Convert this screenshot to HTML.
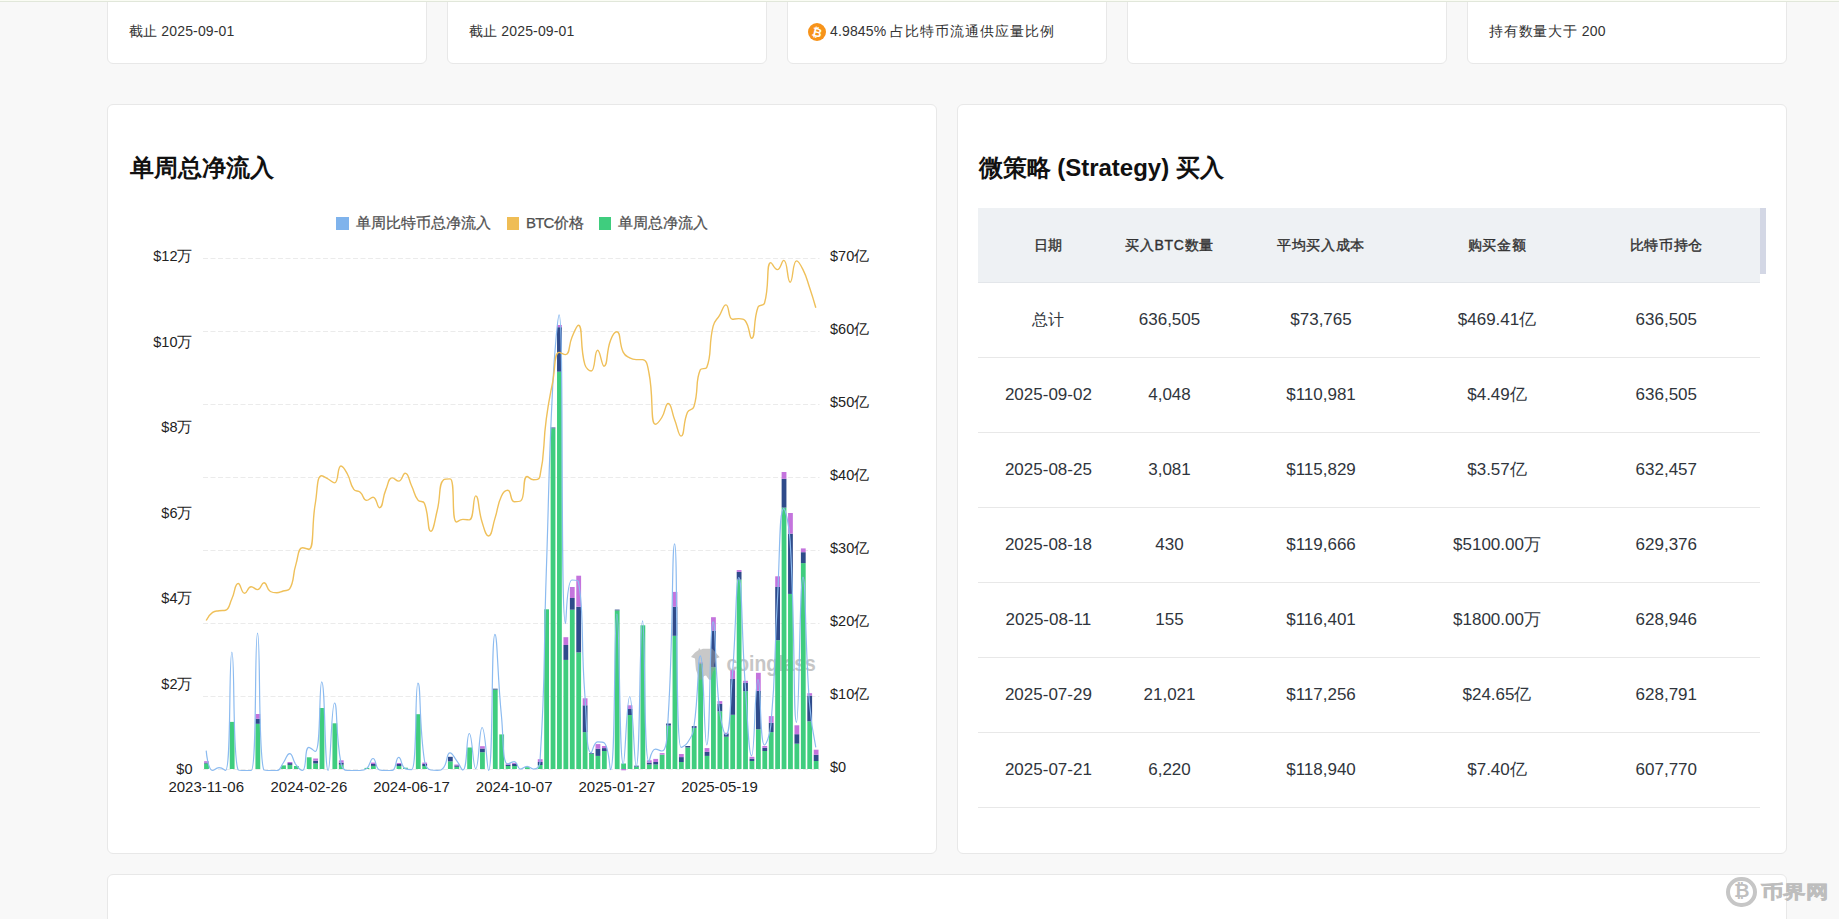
<!DOCTYPE html>
<html><head><meta charset="utf-8">
<style>
*{margin:0;padding:0;box-sizing:border-box}
html,body{width:1839px;height:919px;overflow:hidden;background:#f8f8f8;font-family:"Liberation Sans",sans-serif;color:#333}
.topline0{position:absolute;z-index:5;left:0;top:0;width:1839px;height:1px;background:#fafcf4}
.topline{position:absolute;z-index:5;left:0;top:1px;width:1839px;height:1px;background:#e1e7da}
.card{position:absolute;background:#fff;border:1px solid #e8e8e8;border-radius:6px}
.sc{top:-20px;width:320px;height:84px}
.sct{position:absolute;left:21px;top:42px;font-size:14px;letter-spacing:0.15px;line-height:16px;color:#333;white-space:nowrap}
.abs{position:absolute;white-space:nowrap}
.ttl{font-size:24px;font-weight:bold;color:#111;line-height:28px}
.th{position:absolute;top:208px;left:978px;width:782px;height:75px;background:#eef1f4;border-bottom:1px solid #e3e6ea}
.hc{position:absolute;font-size:14px;letter-spacing:0.7px;font-weight:normal;-webkit-text-stroke:0.4px #333;color:#333;text-align:center;width:200px;margin-left:-100px;line-height:16px}
.rc{position:absolute;font-size:17px;color:#30353c;text-align:center;width:240px;margin-left:-120px;line-height:18px}
.rl{position:absolute;left:978px;width:782px;height:1px;background:#e8e8e8}
.lg{font-size:15px;color:#505050;line-height:18px;-webkit-text-stroke:0.25px #505050}
.ax{font-size:14.5px;color:#222;line-height:18px;white-space:nowrap}
</style></head><body>
<div class="topline0"></div><div class="topline"></div>
<div class="card sc" style="left:107px"><div class="sct">截止 2025-09-01</div></div>
<div class="card sc" style="left:447px"><div class="sct">截止 2025-09-01</div></div>
<div class="card sc" style="left:787px"><div class="sct" style="left:42px">4.9845% <span style="letter-spacing:0.95px">占比特币流通供应量比例</span></div>
<svg class="abs" style="left:20px;top:41.5px" width="18" height="18" viewBox="0 0 18 18"><circle cx="9" cy="9" r="9" fill="#f7931a"/><text x="9" y="13.5" font-size="12" font-weight="bold" fill="#fff" text-anchor="middle" font-family="Liberation Sans" transform="rotate(14 9 9)">₿</text></svg></div>
<div class="card sc" style="left:1127px"></div>
<div class="card sc" style="left:1467px"><div class="sct"><span style="letter-spacing:0.8px">持有数量大于</span> 200</div></div>

<div class="card" style="left:107px;top:104px;width:830px;height:750px"></div>
<div class="abs ttl" style="left:128px;top:154px;left:129.5px">单周总净流入</div>


<svg class="abs" style="left:0;top:0" width="1839" height="919" viewBox="0 0 1839 919">
<line x1="203" y1="258.5" x2="819.5" y2="258.5" stroke="#ebebeb" stroke-width="1" stroke-dasharray="5 2.5"/>
<line x1="203" y1="331.5" x2="819.5" y2="331.5" stroke="#ebebeb" stroke-width="1" stroke-dasharray="5 2.5"/>
<line x1="203" y1="404.5" x2="819.5" y2="404.5" stroke="#ebebeb" stroke-width="1" stroke-dasharray="5 2.5"/>
<line x1="203" y1="477.5" x2="819.5" y2="477.5" stroke="#ebebeb" stroke-width="1" stroke-dasharray="5 2.5"/>
<line x1="203" y1="550.5" x2="819.5" y2="550.5" stroke="#ebebeb" stroke-width="1" stroke-dasharray="5 2.5"/>
<line x1="203" y1="623.5" x2="819.5" y2="623.5" stroke="#ebebeb" stroke-width="1" stroke-dasharray="5 2.5"/>
<line x1="203" y1="696.5" x2="819.5" y2="696.5" stroke="#ebebeb" stroke-width="1" stroke-dasharray="5 2.5"/>
<line x1="203" y1="769.5" x2="819.5" y2="769.5" stroke="#ebebeb" stroke-width="1" stroke-dasharray="5 2.5"/>
<rect x="621.20" y="769" width="4.8" height="1.3" fill="#c474dd"/>
<text x="726.5" y="670.8" font-family="Liberation Sans" font-weight="bold" font-size="22" fill="#c6c6c6" textLength="89.2" lengthAdjust="spacingAndGlyphs">coinglass</text>
<rect x="204.10" y="763.50" width="4.8" height="5.50" fill="#3fcd7e"/>
<rect x="204.10" y="762.60" width="4.8" height="0.90" fill="#2f4b8b"/>
<rect x="204.10" y="761.20" width="4.8" height="1.40" fill="#c474dd"/>
<rect x="229.77" y="721.90" width="4.8" height="47.10" fill="#3fcd7e"/>
<rect x="255.44" y="723.80" width="4.8" height="45.20" fill="#3fcd7e"/>
<rect x="255.44" y="718.70" width="4.8" height="5.10" fill="#2f4b8b"/>
<rect x="255.44" y="714.00" width="4.8" height="4.70" fill="#c474dd"/>
<rect x="281.10" y="765.40" width="4.8" height="3.60" fill="#3fcd7e"/>
<rect x="287.52" y="764.90" width="4.8" height="4.10" fill="#3fcd7e"/>
<rect x="287.52" y="763.10" width="4.8" height="1.80" fill="#2f4b8b"/>
<rect x="287.52" y="762.00" width="4.8" height="1.10" fill="#c474dd"/>
<rect x="293.94" y="766.00" width="4.8" height="3.00" fill="#3fcd7e"/>
<rect x="306.77" y="757.30" width="4.8" height="11.70" fill="#3fcd7e"/>
<rect x="313.19" y="763.50" width="4.8" height="5.50" fill="#3fcd7e"/>
<rect x="313.19" y="760.80" width="4.8" height="2.70" fill="#2f4b8b"/>
<rect x="313.19" y="758.50" width="4.8" height="2.30" fill="#c474dd"/>
<rect x="319.61" y="708.00" width="4.8" height="61.00" fill="#3fcd7e"/>
<rect x="332.44" y="723.30" width="4.8" height="45.70" fill="#3fcd7e"/>
<rect x="338.86" y="764.70" width="4.8" height="4.30" fill="#3fcd7e"/>
<rect x="338.86" y="762.60" width="4.8" height="2.10" fill="#2f4b8b"/>
<rect x="338.86" y="760.30" width="4.8" height="2.30" fill="#c474dd"/>
<rect x="364.53" y="767.90" width="4.8" height="1.10" fill="#3fcd7e"/>
<rect x="370.94" y="765.90" width="4.8" height="3.10" fill="#3fcd7e"/>
<rect x="370.94" y="764.00" width="4.8" height="1.90" fill="#2f4b8b"/>
<rect x="370.94" y="762.60" width="4.8" height="1.40" fill="#c474dd"/>
<rect x="396.61" y="766.00" width="4.8" height="3.00" fill="#3fcd7e"/>
<rect x="396.61" y="764.00" width="4.8" height="2.00" fill="#2f4b8b"/>
<rect x="396.61" y="763.00" width="4.8" height="1.00" fill="#c474dd"/>
<rect x="403.03" y="767.70" width="4.8" height="1.30" fill="#3fcd7e"/>
<rect x="415.86" y="714.20" width="4.8" height="54.80" fill="#3fcd7e"/>
<rect x="422.28" y="766.00" width="4.8" height="3.00" fill="#3fcd7e"/>
<rect x="422.28" y="764.00" width="4.8" height="2.00" fill="#2f4b8b"/>
<rect x="422.28" y="762.60" width="4.8" height="1.40" fill="#c474dd"/>
<rect x="447.95" y="761.40" width="4.8" height="7.60" fill="#3fcd7e"/>
<rect x="447.95" y="756.80" width="4.8" height="4.60" fill="#2f4b8b"/>
<rect x="454.36" y="766.80" width="4.8" height="2.20" fill="#3fcd7e"/>
<rect x="454.36" y="765.40" width="4.8" height="1.40" fill="#2f4b8b"/>
<rect x="454.36" y="764.50" width="4.8" height="0.90" fill="#c474dd"/>
<rect x="467.20" y="747.50" width="4.8" height="21.50" fill="#3fcd7e"/>
<rect x="480.03" y="752.20" width="4.8" height="16.80" fill="#3fcd7e"/>
<rect x="480.03" y="748.50" width="4.8" height="3.70" fill="#2f4b8b"/>
<rect x="480.03" y="746.20" width="4.8" height="2.30" fill="#c474dd"/>
<rect x="492.87" y="689.60" width="4.8" height="79.40" fill="#3fcd7e"/>
<rect x="492.87" y="688.70" width="4.8" height="0.90" fill="#2f4b8b"/>
<rect x="499.28" y="734.40" width="4.8" height="34.60" fill="#3fcd7e"/>
<rect x="505.70" y="766.00" width="4.8" height="3.00" fill="#3fcd7e"/>
<rect x="505.70" y="764.70" width="4.8" height="1.30" fill="#2f4b8b"/>
<rect x="505.70" y="763.30" width="4.8" height="1.40" fill="#c474dd"/>
<rect x="512.12" y="766.00" width="4.8" height="3.00" fill="#3fcd7e"/>
<rect x="512.12" y="764.00" width="4.8" height="2.00" fill="#2f4b8b"/>
<rect x="512.12" y="763.00" width="4.8" height="1.00" fill="#c474dd"/>
<rect x="524.95" y="767.20" width="4.8" height="1.80" fill="#3fcd7e"/>
<rect x="537.78" y="765.00" width="4.8" height="4.00" fill="#3fcd7e"/>
<rect x="537.78" y="762.00" width="4.8" height="3.00" fill="#2f4b8b"/>
<rect x="537.78" y="759.20" width="4.8" height="2.80" fill="#c474dd"/>
<rect x="544.20" y="609.30" width="4.8" height="159.70" fill="#3fcd7e"/>
<rect x="550.62" y="428.30" width="4.8" height="340.70" fill="#3fcd7e"/>
<rect x="550.62" y="427.50" width="4.8" height="0.80" fill="#2f4b8b"/>
<rect x="557.03" y="371.70" width="4.8" height="397.30" fill="#3fcd7e"/>
<rect x="557.03" y="327.20" width="4.8" height="44.50" fill="#2f4b8b"/>
<rect x="557.03" y="325.00" width="4.8" height="2.20" fill="#c474dd"/>
<rect x="563.45" y="659.90" width="4.8" height="109.10" fill="#3fcd7e"/>
<rect x="563.45" y="645.00" width="4.8" height="14.90" fill="#2f4b8b"/>
<rect x="563.45" y="637.20" width="4.8" height="7.80" fill="#c474dd"/>
<rect x="569.87" y="609.70" width="4.8" height="159.30" fill="#3fcd7e"/>
<rect x="569.87" y="598.00" width="4.8" height="11.70" fill="#2f4b8b"/>
<rect x="569.87" y="587.00" width="4.8" height="11.00" fill="#c474dd"/>
<rect x="576.29" y="652.40" width="4.8" height="116.60" fill="#3fcd7e"/>
<rect x="576.29" y="606.70" width="4.8" height="45.70" fill="#2f4b8b"/>
<rect x="576.29" y="575.70" width="4.8" height="31.00" fill="#c474dd"/>
<rect x="582.70" y="732.10" width="4.8" height="36.90" fill="#3fcd7e"/>
<rect x="582.70" y="705.30" width="4.8" height="26.80" fill="#2f4b8b"/>
<rect x="582.70" y="698.30" width="4.8" height="7.00" fill="#c474dd"/>
<rect x="589.12" y="753.80" width="4.8" height="15.20" fill="#3fcd7e"/>
<rect x="589.12" y="753.10" width="4.8" height="0.70" fill="#2f4b8b"/>
<rect x="595.54" y="755.90" width="4.8" height="13.10" fill="#3fcd7e"/>
<rect x="595.54" y="748.70" width="4.8" height="7.20" fill="#2f4b8b"/>
<rect x="595.54" y="744.10" width="4.8" height="4.60" fill="#c474dd"/>
<rect x="601.95" y="751.00" width="4.8" height="18.00" fill="#3fcd7e"/>
<rect x="601.95" y="748.10" width="4.8" height="2.90" fill="#2f4b8b"/>
<rect x="601.95" y="746.00" width="4.8" height="2.10" fill="#c474dd"/>
<rect x="614.79" y="610.40" width="4.8" height="158.60" fill="#3fcd7e"/>
<rect x="614.79" y="609.60" width="4.8" height="0.80" fill="#2f4b8b"/>
<rect x="621.20" y="763.50" width="4.8" height="5.50" fill="#3fcd7e"/>
<rect x="627.62" y="715.00" width="4.8" height="54.00" fill="#3fcd7e"/>
<rect x="627.62" y="709.00" width="4.8" height="6.00" fill="#2f4b8b"/>
<rect x="627.62" y="705.30" width="4.8" height="3.70" fill="#c474dd"/>
<rect x="634.04" y="766.60" width="4.8" height="2.40" fill="#3fcd7e"/>
<rect x="634.04" y="765.70" width="4.8" height="0.90" fill="#2f4b8b"/>
<rect x="640.46" y="625.30" width="4.8" height="143.70" fill="#3fcd7e"/>
<rect x="646.87" y="764.50" width="4.8" height="4.50" fill="#3fcd7e"/>
<rect x="646.87" y="762.60" width="4.8" height="1.90" fill="#2f4b8b"/>
<rect x="646.87" y="760.30" width="4.8" height="2.30" fill="#c474dd"/>
<rect x="653.29" y="764.50" width="4.8" height="4.50" fill="#3fcd7e"/>
<rect x="653.29" y="762.00" width="4.8" height="2.50" fill="#2f4b8b"/>
<rect x="653.29" y="758.90" width="4.8" height="3.10" fill="#c474dd"/>
<rect x="659.71" y="754.60" width="4.8" height="14.40" fill="#3fcd7e"/>
<rect x="659.71" y="753.10" width="4.8" height="1.50" fill="#c474dd"/>
<rect x="666.12" y="725.60" width="4.8" height="43.40" fill="#3fcd7e"/>
<rect x="666.12" y="723.50" width="4.8" height="2.10" fill="#2f4b8b"/>
<rect x="672.54" y="635.80" width="4.8" height="133.20" fill="#3fcd7e"/>
<rect x="672.54" y="606.70" width="4.8" height="29.10" fill="#2f4b8b"/>
<rect x="672.54" y="591.90" width="4.8" height="14.80" fill="#c474dd"/>
<rect x="678.96" y="762.00" width="4.8" height="7.00" fill="#3fcd7e"/>
<rect x="678.96" y="757.10" width="4.8" height="4.90" fill="#2f4b8b"/>
<rect x="678.96" y="754.00" width="4.8" height="3.10" fill="#c474dd"/>
<rect x="685.37" y="747.50" width="4.8" height="21.50" fill="#3fcd7e"/>
<rect x="685.37" y="746.00" width="4.8" height="1.50" fill="#2f4b8b"/>
<rect x="691.79" y="727.90" width="4.8" height="41.10" fill="#3fcd7e"/>
<rect x="691.79" y="726.10" width="4.8" height="1.80" fill="#2f4b8b"/>
<rect x="698.21" y="663.40" width="4.8" height="105.60" fill="#3fcd7e"/>
<rect x="698.21" y="662.60" width="4.8" height="0.80" fill="#c474dd"/>
<rect x="704.63" y="755.90" width="4.8" height="13.10" fill="#3fcd7e"/>
<rect x="704.63" y="751.80" width="4.8" height="4.10" fill="#2f4b8b"/>
<rect x="704.63" y="748.10" width="4.8" height="3.70" fill="#c474dd"/>
<rect x="711.04" y="667.20" width="4.8" height="101.80" fill="#3fcd7e"/>
<rect x="711.04" y="630.60" width="4.8" height="36.60" fill="#2f4b8b"/>
<rect x="711.04" y="617.20" width="4.8" height="13.40" fill="#c474dd"/>
<rect x="717.46" y="711.30" width="4.8" height="57.70" fill="#3fcd7e"/>
<rect x="717.46" y="703.90" width="4.8" height="7.40" fill="#2f4b8b"/>
<rect x="717.46" y="701.10" width="4.8" height="2.80" fill="#c474dd"/>
<rect x="723.88" y="736.70" width="4.8" height="32.30" fill="#3fcd7e"/>
<rect x="723.88" y="733.50" width="4.8" height="3.20" fill="#2f4b8b"/>
<rect x="723.88" y="732.70" width="4.8" height="0.80" fill="#c474dd"/>
<rect x="730.29" y="714.80" width="4.8" height="54.20" fill="#3fcd7e"/>
<rect x="730.29" y="679.00" width="4.8" height="35.80" fill="#2f4b8b"/>
<rect x="730.29" y="670.30" width="4.8" height="8.70" fill="#c474dd"/>
<rect x="736.71" y="579.70" width="4.8" height="189.30" fill="#3fcd7e"/>
<rect x="736.71" y="571.90" width="4.8" height="7.80" fill="#2f4b8b"/>
<rect x="736.71" y="570.10" width="4.8" height="1.80" fill="#c474dd"/>
<rect x="743.13" y="691.20" width="4.8" height="77.80" fill="#3fcd7e"/>
<rect x="743.13" y="682.90" width="4.8" height="8.30" fill="#2f4b8b"/>
<rect x="743.13" y="680.80" width="4.8" height="2.10" fill="#c474dd"/>
<rect x="749.54" y="761.00" width="4.8" height="8.00" fill="#3fcd7e"/>
<rect x="749.54" y="758.60" width="4.8" height="2.40" fill="#2f4b8b"/>
<rect x="749.54" y="756.80" width="4.8" height="1.80" fill="#c474dd"/>
<rect x="755.96" y="729.30" width="4.8" height="39.70" fill="#3fcd7e"/>
<rect x="755.96" y="690.90" width="4.8" height="38.40" fill="#2f4b8b"/>
<rect x="755.96" y="672.80" width="4.8" height="18.10" fill="#c474dd"/>
<rect x="762.38" y="751.00" width="4.8" height="18.00" fill="#3fcd7e"/>
<rect x="762.38" y="747.80" width="4.8" height="3.20" fill="#2f4b8b"/>
<rect x="762.38" y="746.00" width="4.8" height="1.80" fill="#c474dd"/>
<rect x="768.80" y="732.10" width="4.8" height="36.90" fill="#3fcd7e"/>
<rect x="768.80" y="722.80" width="4.8" height="9.30" fill="#2f4b8b"/>
<rect x="768.80" y="716.10" width="4.8" height="6.70" fill="#c474dd"/>
<rect x="775.21" y="640.20" width="4.8" height="128.80" fill="#3fcd7e"/>
<rect x="775.21" y="587.00" width="4.8" height="53.20" fill="#2f4b8b"/>
<rect x="775.21" y="576.30" width="4.8" height="10.70" fill="#c474dd"/>
<rect x="781.63" y="507.60" width="4.8" height="261.40" fill="#3fcd7e"/>
<rect x="781.63" y="478.80" width="4.8" height="28.80" fill="#2f4b8b"/>
<rect x="781.63" y="472.00" width="4.8" height="6.80" fill="#c474dd"/>
<rect x="788.05" y="593.90" width="4.8" height="175.10" fill="#3fcd7e"/>
<rect x="788.05" y="533.70" width="4.8" height="60.20" fill="#2f4b8b"/>
<rect x="788.05" y="513.00" width="4.8" height="20.70" fill="#c474dd"/>
<rect x="794.46" y="743.70" width="4.8" height="25.30" fill="#3fcd7e"/>
<rect x="794.46" y="734.20" width="4.8" height="9.50" fill="#2f4b8b"/>
<rect x="794.46" y="725.30" width="4.8" height="8.90" fill="#c474dd"/>
<rect x="800.88" y="563.10" width="4.8" height="205.90" fill="#3fcd7e"/>
<rect x="800.88" y="552.20" width="4.8" height="10.90" fill="#2f4b8b"/>
<rect x="800.88" y="548.40" width="4.8" height="3.80" fill="#c474dd"/>
<rect x="807.30" y="721.30" width="4.8" height="47.70" fill="#3fcd7e"/>
<rect x="807.30" y="695.60" width="4.8" height="25.70" fill="#2f4b8b"/>
<rect x="807.30" y="693.20" width="4.8" height="2.40" fill="#c474dd"/>
<rect x="813.72" y="761.00" width="4.8" height="8.00" fill="#3fcd7e"/>
<rect x="813.72" y="754.80" width="4.8" height="6.20" fill="#2f4b8b"/>
<rect x="813.72" y="749.70" width="4.8" height="5.10" fill="#c474dd"/>
<path fill="#9a9a9a" fill-opacity="0.55" d="M691,657 L695,652.5 L698.5,650 L699,647.8 L700.5,649.8 L703,648.8 L710,648.8 L712,648.5 L716.5,653.5 L719.7,657.2 L716,658.5 L714,665 L715,669 L713,672 L711,679.8 L709,679.8 L706,675.5 L704,676 L702,679.8 L699,679.8 L697.5,674 L696,670 L695.5,665 L695,658.5 Z"/>
<path d="M206.20,750.60 C206.20,750.60 207.81,770.50 212.62,770.50 C214.23,770.50 215.83,767.70 219.03,767.70 C222.24,767.70 225.09,770.50 225.45,770.50 C231.51,770.50 228.65,652.20 231.87,652.20 C235.07,652.20 232.20,760.84 238.28,770.00 C238.62,770.50 241.49,770.50 244.70,770.50 C247.91,770.50 250.83,770.50 251.12,770.50 C257.25,770.50 254.32,633.10 257.54,633.10 C260.74,633.10 257.82,759.35 263.95,770.00 C264.24,770.50 267.16,770.50 270.37,770.50 C273.57,770.50 274.26,770.50 276.79,770.50 C280.68,770.50 280.22,766.92 283.20,763.00 C286.64,758.47 286.62,753.60 289.62,753.60 C293.04,753.60 292.16,759.80 296.04,764.90 C298.58,768.25 300.77,770.50 302.45,770.50 C307.19,770.50 304.00,747.40 308.87,747.40 C310.42,747.40 314.66,751.50 315.29,751.50 C321.08,751.50 318.88,681.80 321.71,681.80 C325.30,681.80 324.48,770.50 328.12,770.50 C330.90,770.50 331.15,703.00 334.54,703.00 C337.56,703.00 335.43,734.06 340.96,763.10 C341.85,767.81 343.50,770.50 347.37,770.50 C349.91,770.50 350.58,770.50 353.79,770.50 C357.00,770.50 357.07,770.50 360.21,770.50 C363.48,770.50 364.32,770.50 366.62,768.60 C370.74,765.20 369.99,758.50 373.04,758.50 C376.40,758.50 375.15,768.98 379.46,770.00 C381.57,770.50 382.66,770.50 385.88,770.50 C389.08,770.50 390.32,770.50 392.29,770.30 C396.74,769.85 395.33,757.30 398.71,757.30 C401.74,757.30 400.85,766.60 405.13,768.60 C407.27,769.60 411.10,769.60 411.54,769.60 C417.51,769.60 414.56,683.20 417.96,683.20 C420.98,683.20 418.82,722.40 424.38,760.00 C425.24,765.80 426.63,769.44 430.79,770.00 C433.05,770.30 434.12,770.30 437.21,770.30 C440.54,770.30 441.70,770.30 443.63,767.70 C448.12,761.64 446.05,752.90 450.05,752.90 C452.47,752.90 453.53,756.39 456.46,760.30 C459.95,764.94 461.35,770.00 462.88,770.00 C467.76,770.00 466.03,733.50 469.30,733.50 C472.44,733.50 472.75,768.60 475.71,768.60 C479.17,768.60 478.99,727.50 482.13,727.50 C485.41,727.50 487.00,770.50 488.55,770.50 C493.41,770.50 490.94,634.30 494.96,634.30 C497.36,634.30 497.39,674.83 501.38,715.19 C503.80,739.68 502.16,764.00 507.80,764.00 C508.58,764.00 511.57,761.70 514.22,761.70 C517.99,761.70 516.89,769.00 520.63,769.00 C523.31,769.00 523.84,766.30 527.05,766.30 C530.26,766.30 530.63,769.00 533.47,769.00 C537.05,769.00 539.60,767.33 539.88,763.00 C546.02,668.65 543.04,667.32 546.30,571.65 C549.46,478.78 548.08,478.69 552.72,385.92 C554.50,350.27 557.93,314.80 559.13,314.80 C564.35,314.80 559.94,623.60 565.55,623.60 C566.35,623.60 566.39,580.00 571.97,580.00 C572.81,580.00 578.03,580.00 578.39,581.80 C584.44,612.23 580.59,638.14 584.80,694.30 C587.01,723.69 585.95,752.90 591.22,752.90 C592.37,752.90 593.37,741.80 597.64,741.80 C599.79,741.80 602.84,741.80 604.05,742.70 C609.25,746.54 609.50,769.60 610.47,769.60 C615.92,769.60 613.62,614.00 616.89,614.00 C620.04,614.00 618.88,764.00 623.30,764.00 C625.30,764.00 626.57,696.50 629.72,696.50 C632.98,696.50 634.05,766.30 636.14,766.30 C640.47,766.30 639.30,620.80 642.56,620.80 C645.71,620.80 643.14,761.70 648.97,761.70 C649.55,761.70 651.04,749.20 655.39,749.20 C657.45,749.20 660.79,751.00 661.81,751.00 C667.21,751.00 667.13,733.84 668.22,716.22 C673.55,630.24 671.70,543.80 674.64,543.80 C678.12,543.80 674.88,747.40 681.06,747.40 C681.30,747.40 685.43,745.96 687.47,742.70 C691.84,735.76 692.66,735.33 693.89,727.00 C699.08,691.93 697.46,655.90 700.31,655.90 C703.88,655.90 704.03,745.00 706.73,745.00 C710.45,745.00 709.41,621.90 713.14,621.90 C715.83,621.90 714.57,666.39 719.56,710.30 C720.99,722.89 724.08,734.90 725.98,734.90 C730.49,734.90 729.94,704.92 732.39,674.82 C736.36,626.22 735.76,577.50 738.81,577.50 C742.17,577.50 741.37,631.15 745.23,684.71 C747.79,720.25 748.54,755.70 751.64,755.70 C754.96,755.70 754.61,679.70 758.06,679.70 C761.03,679.70 759.62,745.00 764.48,745.00 C766.04,745.00 769.96,735.39 770.90,724.95 C776.37,664.01 773.68,663.57 777.31,602.24 C780.09,555.40 778.99,508.60 783.73,508.60 C785.41,508.60 789.15,524.64 790.15,541.19 C795.57,631.54 793.00,722.40 796.56,722.40 C799.42,722.40 799.53,577.00 802.98,577.00 C805.95,577.00 804.70,639.61 809.40,701.93 C811.12,724.81 815.82,747.40 815.82,747.40" fill="none" stroke="#8cbbf0" stroke-width="1.2" stroke-linejoin="round"/>
<path d="M206.20,620.50 C206.20,620.50 208.71,615.05 212.62,612.40 C215.13,610.70 215.78,611.22 219.03,610.70 C222.19,610.20 223.34,610.70 225.45,610.20 C229.76,609.18 229.02,604.63 231.87,598.70 C235.44,591.28 234.53,583.50 238.28,583.50 C240.95,583.50 241.11,593.30 244.70,593.30 C247.53,593.30 247.48,586.70 251.12,586.70 C253.90,586.70 254.78,589.60 257.54,589.60 C261.20,589.60 260.98,582.80 263.95,582.80 C267.39,582.80 266.37,589.35 270.37,591.50 C272.79,592.80 273.61,592.80 276.79,592.80 C280.02,592.80 280.02,591.97 283.20,591.00 C286.43,590.02 288.29,591.00 289.62,588.90 C294.71,580.87 292.20,576.19 296.04,563.90 C298.62,555.64 297.80,547.80 302.45,547.80 C304.22,547.80 308.07,549.20 308.87,549.20 C314.49,549.20 311.32,526.21 315.29,503.50 C317.74,489.51 316.58,475.80 321.71,475.80 C323.00,475.80 324.99,477.27 328.12,479.00 C331.41,480.82 332.66,482.90 334.54,482.90 C339.07,482.90 336.86,466.00 340.96,466.00 C343.28,466.00 344.93,469.55 347.37,474.00 C351.35,481.25 349.28,482.97 353.79,489.40 C355.70,492.12 357.61,490.07 360.21,492.30 C364.02,495.57 362.84,500.40 366.62,500.40 C369.25,500.40 370.68,497.20 373.04,497.20 C377.10,497.20 376.95,507.70 379.46,507.70 C383.37,507.70 382.09,498.39 385.88,489.60 C388.51,483.49 388.12,477.90 392.29,477.90 C394.54,477.90 396.05,481.10 398.71,481.10 C402.46,481.10 402.43,473.30 405.13,473.30 C408.85,473.30 408.53,479.41 411.54,485.70 C414.95,492.81 413.55,494.05 417.96,500.10 C419.97,502.85 423.10,500.18 424.38,503.30 C429.52,515.83 427.15,531.40 430.79,531.40 C433.56,531.40 434.58,521.10 437.21,510.50 C440.99,495.30 438.31,484.16 443.63,479.80 C444.73,478.90 449.22,478.90 450.05,478.90 C455.63,478.90 450.93,522.00 456.46,522.00 C457.34,522.00 459.55,519.40 462.88,519.40 C465.97,519.40 467.98,519.90 469.30,519.90 C474.39,519.90 472.65,495.90 475.71,495.90 C479.07,495.90 478.01,509.42 482.13,522.30 C484.43,529.47 485.68,536.00 488.55,536.00 C492.10,536.00 492.09,527.31 494.96,518.40 C498.51,507.41 496.72,506.40 501.38,496.20 C503.14,492.35 505.23,490.30 507.80,490.30 C511.65,490.30 509.92,501.70 514.22,501.70 C516.34,501.70 519.33,501.70 520.63,501.00 C525.75,498.25 522.06,476.50 527.05,476.50 C528.47,476.50 530.26,479.80 533.47,479.80 C536.68,479.80 539.17,479.80 539.88,476.50 C545.59,449.95 542.40,447.55 546.30,418.80 C548.82,400.20 549.16,400.23 552.72,381.80 C555.57,367.03 553.90,352.40 559.13,352.40 C560.32,352.40 563.83,354.60 565.55,354.60 C570.25,354.60 568.27,345.68 571.97,337.20 C574.68,330.98 576.75,325.20 578.39,325.20 C583.17,325.20 579.59,345.81 584.80,364.40 C586.01,368.71 589.31,371.00 591.22,371.00 C595.72,371.00 594.05,350.30 597.64,350.30 C600.47,350.30 601.53,366.20 604.05,366.20 C607.95,366.20 605.91,352.71 610.47,340.50 C612.33,335.51 614.75,331.80 616.89,331.80 C621.16,331.80 618.69,343.02 623.30,352.40 C625.11,356.07 626.13,355.88 629.72,357.90 C632.54,359.48 632.88,359.60 636.14,359.60 C639.29,359.60 640.62,359.60 642.56,359.60 C647.04,359.60 647.54,365.78 648.97,373.00 C653.96,398.13 649.96,424.30 655.39,424.30 C656.37,424.30 659.38,421.43 661.81,417.50 C665.80,411.03 665.22,403.50 668.22,403.50 C671.64,403.50 671.43,411.65 674.64,419.80 C677.85,427.95 678.40,436.10 681.06,436.10 C684.82,436.10 682.69,423.16 687.47,412.20 C689.11,408.46 692.71,410.60 693.89,406.70 C699.13,389.35 694.87,381.88 700.31,369.70 C701.29,367.50 705.83,369.70 706.73,367.50 C712.25,353.95 708.22,346.24 713.14,326.20 C714.63,320.14 716.30,320.72 719.56,315.30 C722.71,310.07 723.17,304.90 725.98,304.90 C729.58,304.90 727.85,319.20 732.39,319.20 C734.26,319.20 735.68,318.60 738.81,318.60 C742.09,318.60 743.52,318.60 745.23,320.70 C749.94,326.50 749.28,338.20 751.64,338.20 C755.69,338.20 752.86,321.16 758.06,307.00 C759.27,303.71 763.50,306.68 764.48,303.30 C769.92,284.48 765.68,262.60 770.90,262.60 C772.10,262.60 774.37,269.60 777.31,269.60 C780.79,269.60 781.61,260.40 783.73,260.40 C788.03,260.40 786.90,282.20 790.15,282.20 C793.32,282.20 792.25,260.90 796.56,260.90 C798.66,260.90 800.62,264.79 802.98,269.60 C807.03,277.84 806.44,278.22 809.40,287.00 C812.86,297.27 815.82,307.70 815.82,307.70" fill="none" stroke="#efc05a" stroke-width="1.4" stroke-linejoin="round"/>
</svg>
<div class="abs" style="left:336px;top:217px;width:13px;height:12.5px;background:#7fb3ec"></div>
<div class="abs lg" style="left:355.5px;top:214px">单周比特币总净流入</div>
<div class="abs" style="left:506.5px;top:217px;width:12.5px;height:12.5px;background:#efbd55"></div>
<div class="abs lg" style="left:526px;top:214px"><span style="letter-spacing:-0.8px">BTC</span>价格</div>
<div class="abs" style="left:598.5px;top:217px;width:12.5px;height:12.5px;background:#3fcd7e"></div>
<div class="abs lg" style="left:618px;top:214px">单周总净流入</div>
<div class="abs ax" style="right:1646.5px;top:760.0px">$0</div>
<div class="abs ax" style="right:1646.5px;top:674.5px">$2万</div>
<div class="abs ax" style="right:1646.5px;top:589.0px">$4万</div>
<div class="abs ax" style="right:1646.5px;top:503.5px">$6万</div>
<div class="abs ax" style="right:1646.5px;top:418.0px">$8万</div>
<div class="abs ax" style="right:1646.5px;top:332.5px">$10万</div>
<div class="abs ax" style="right:1646.5px;top:247.0px">$12万</div>
<div class="abs ax" style="left:830px;top:758.0px">$0</div>
<div class="abs ax" style="left:830px;top:685.0px">$10亿</div>
<div class="abs ax" style="left:830px;top:612.0px">$20亿</div>
<div class="abs ax" style="left:830px;top:539.0px">$30亿</div>
<div class="abs ax" style="left:830px;top:466.0px">$40亿</div>
<div class="abs ax" style="left:830px;top:393.0px">$50亿</div>
<div class="abs ax" style="left:830px;top:320.0px">$60亿</div>
<div class="abs ax" style="left:830px;top:247.0px">$70亿</div>
<div class="abs ax" style="font-size:15px;left:146.2px;width:120px;text-align:center;top:778px">2023-11-06</div>
<div class="abs ax" style="font-size:15px;left:248.9px;width:120px;text-align:center;top:778px">2024-02-26</div>
<div class="abs ax" style="font-size:15px;left:351.5px;width:120px;text-align:center;top:778px">2024-06-17</div>
<div class="abs ax" style="font-size:15px;left:454.2px;width:120px;text-align:center;top:778px">2024-10-07</div>
<div class="abs ax" style="font-size:15px;left:556.9px;width:120px;text-align:center;top:778px">2025-01-27</div>
<div class="abs ax" style="font-size:15px;left:659.6px;width:120px;text-align:center;top:778px">2025-05-19</div>


<div class="card" style="left:957px;top:104px;width:830px;height:750px"></div>
<div class="abs ttl" style="left:978.5px;top:154px">微策略 (Strategy) 买入</div>
<div class="th"></div>
<div class="abs" style="left:1760px;top:208px;width:6px;height:66px;background:#d3d7e5"></div>
<div class="hc" style="left:1048.4px;top:237px">日期</div>
<div class="hc" style="left:1169.5px;top:237px">买入BTC数量</div>
<div class="hc" style="left:1321px;top:237px">平均买入成本</div>
<div class="hc" style="left:1497px;top:237px">购买金额</div>
<div class="hc" style="left:1666.3px;top:237px">比特币持仓</div>
<div class="rc" style="left:1048.4px;top:310.5px;font-size:16px">总计</div>
<div class="rc" style="left:1169.5px;top:310.5px">636,505</div>
<div class="rc" style="left:1321px;top:310.5px">$73,765</div>
<div class="rc" style="left:1497px;top:310.5px">$469.41亿</div>
<div class="rc" style="left:1666.3px;top:310.5px">636,505</div>
<div class="rl" style="top:357px"></div>
<div class="rc" style="left:1048.4px;top:385.5px">2025-09-02</div>
<div class="rc" style="left:1169.5px;top:385.5px">4,048</div>
<div class="rc" style="left:1321px;top:385.5px">$110,981</div>
<div class="rc" style="left:1497px;top:385.5px">$4.49亿</div>
<div class="rc" style="left:1666.3px;top:385.5px">636,505</div>
<div class="rl" style="top:432px"></div>
<div class="rc" style="left:1048.4px;top:460.5px">2025-08-25</div>
<div class="rc" style="left:1169.5px;top:460.5px">3,081</div>
<div class="rc" style="left:1321px;top:460.5px">$115,829</div>
<div class="rc" style="left:1497px;top:460.5px">$3.57亿</div>
<div class="rc" style="left:1666.3px;top:460.5px">632,457</div>
<div class="rl" style="top:507px"></div>
<div class="rc" style="left:1048.4px;top:535.5px">2025-08-18</div>
<div class="rc" style="left:1169.5px;top:535.5px">430</div>
<div class="rc" style="left:1321px;top:535.5px">$119,666</div>
<div class="rc" style="left:1497px;top:535.5px">$5100.00万</div>
<div class="rc" style="left:1666.3px;top:535.5px">629,376</div>
<div class="rl" style="top:582px"></div>
<div class="rc" style="left:1048.4px;top:610.5px">2025-08-11</div>
<div class="rc" style="left:1169.5px;top:610.5px">155</div>
<div class="rc" style="left:1321px;top:610.5px">$116,401</div>
<div class="rc" style="left:1497px;top:610.5px">$1800.00万</div>
<div class="rc" style="left:1666.3px;top:610.5px">628,946</div>
<div class="rl" style="top:657px"></div>
<div class="rc" style="left:1048.4px;top:685.5px">2025-07-29</div>
<div class="rc" style="left:1169.5px;top:685.5px">21,021</div>
<div class="rc" style="left:1321px;top:685.5px">$117,256</div>
<div class="rc" style="left:1497px;top:685.5px">$24.65亿</div>
<div class="rc" style="left:1666.3px;top:685.5px">628,791</div>
<div class="rl" style="top:732px"></div>
<div class="rc" style="left:1048.4px;top:760.5px">2025-07-21</div>
<div class="rc" style="left:1169.5px;top:760.5px">6,220</div>
<div class="rc" style="left:1321px;top:760.5px">$118,940</div>
<div class="rc" style="left:1497px;top:760.5px">$7.40亿</div>
<div class="rc" style="left:1666.3px;top:760.5px">607,770</div>
<div class="rl" style="top:807px"></div>

<div class="card" style="left:107px;top:874px;width:1680px;height:100px"></div>
<div class="abs" style="left:1726px;top:876.5px;width:30.5px;height:30.5px;border-radius:50%;border:4px solid #c6c6c6"></div>
<div class="abs" style="left:1734px;top:880px;font-size:19px;font-weight:bold;color:#bfbfbf;line-height:22px">₿</div>
<div class="abs" style="left:1761px;top:878.5px;font-size:22px;font-weight:bold;-webkit-text-stroke:0.7px #bdbdbd;color:#bdbdbd;line-height:26px;transform:scale(1.0,0.8);transform-origin:0 50%;letter-spacing:0.3px">币界网</div>
</body></html>
